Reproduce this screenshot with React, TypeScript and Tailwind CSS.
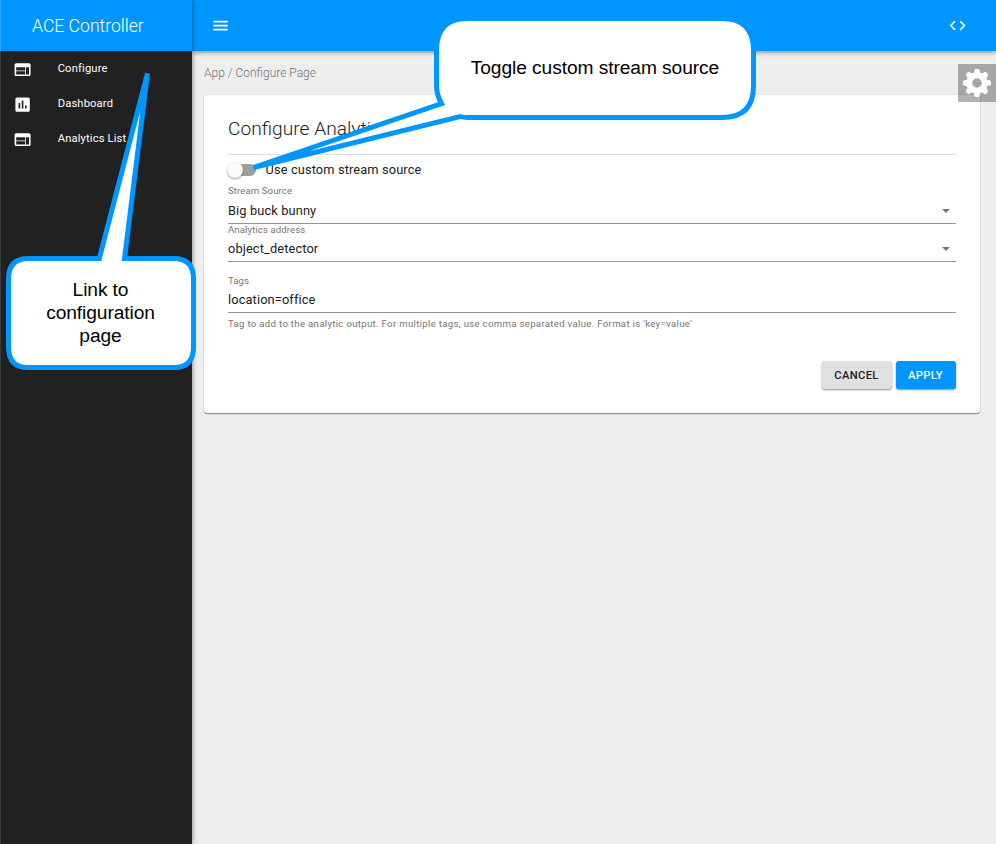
import { MdAssessment, MdCode, MdMenu, MdWeb } from "react-icons/md";

const links = [
  { label: "Configure", icon: MdWeb },
  { label: "Dashboard", icon: MdAssessment },
  { label: "Analytics List", icon: MdWeb },
];

function Sidebar() {
  return (
    <aside className="relative z-20 flex w-[192px] shrink-0 flex-col border-l border-[#3c3c3c] bg-[#212121] shadow-[0_0_5px_rgba(0,0,0,0.5)]">
      <div className="-ml-px flex h-[51px] items-center border-l border-[#2ba6ff] bg-[#0096ff] pl-[31px] text-[17.6px] font-light text-white">
        <span className="whitespace-nowrap pt-px">ACE Controller</span>
      </div>
      <nav className="flex flex-col">
        {links.map(({ label, icon: Icon }) => (
          <a key={label} className="flex h-[35.2px] items-center pl-[12px] text-[11.2px] tracking-[0.15px] text-white">
            <Icon className="mt-px size-[19.2px]" />
            <span className="ml-[25.5px] pt-px leading-4">{label}</span>
          </a>
        ))}
      </nav>
    </aside>
  );
}

function SelectField({ label, value, className }: { label: string; value: string; className: string }) {
  return (
    <div className={`flex flex-col border-b border-[#949494] ${className}`}>
      <span className="text-[9.6px] leading-[12px] tracking-[0.1px] text-[#757575]">{label}</span>
      <div className="flex flex-1 items-center justify-between pr-[6px]">
        <span className="text-[12.8px] leading-4 tracking-[0.13px] text-[#212121]">{value}</span>
        <svg className="mt-px h-[4px] w-[8px]" viewBox="0 0 8 4">
          <path d="M0 0h8L4 4z" fill="#757575" />
        </svg>
      </div>
    </div>
  );
}

function Gear() {
  return (
    <svg className="mr-px size-[28px]" viewBox="-14 -14 28 28" fill="#fff">
      {[0, 45, 90, 135, 180, 225, 270, 315].map((angle) => (
        <path key={angle} transform={`rotate(${angle})`} d="M-3.6-8.5L-2.5-13Q-2.3-14-1.4-14H1.4Q2.3-14 2.5-13L3.6-8.5z" />
      ))}
      <circle r="7.75" fill="none" stroke="#fff" strokeWidth="6" />
    </svg>
  );
}

function Callouts() {
  return (
    <>
      <svg className="pointer-events-none absolute inset-0 z-30 h-[844px] w-[996px]" viewBox="0 0 996 844" fill="#fff" stroke="#0096ff" strokeWidth="5">
        <path d="M467 18.5H722Q753.5 18.5 753.5 50V86Q753.5 117.5 722 117.5H468Q463 117.5 460 116.5L253.5 167.5L441.5 103.5Q436.5 95 436.5 85V50Q436.5 18.5 467 18.5Z" />
        <path d="M28 258.5H99.3L147.5 73.5L124.5 258.5H174Q193.5 258.5 193.5 279V347Q193.5 367.5 174 367.5H28Q8.5 367.5 8.5 347V279Q8.5 258.5 28 258.5Z" />
      </svg>
      <div className="absolute left-[437px] top-[56px] z-40 w-[316px] text-center font-['Liberation_Sans',Arial,sans-serif] text-[19.2px] leading-[23px] tracking-[-0.08px] text-black">
        Toggle custom stream source
      </div>
      <div className="absolute left-[30px] top-[278px] z-40 w-[141px] text-center font-['Liberation_Sans',Arial,sans-serif] text-[19.2px] leading-[23px] tracking-[-0.1px] text-black">
        Link to configuration page
      </div>
    </>
  );
}

export default function App() {
  return (
    <div className="relative flex h-[844px] w-[996px] overflow-hidden bg-[#eeeeee] font-[Roboto,sans-serif]">
      <Sidebar />
      <div className="flex flex-1 flex-col">
        <header className="relative z-10 flex h-[51px] items-center justify-between bg-[#0096ff] pl-[19px] pr-[29px] text-white shadow-[0_2px_4px_rgba(0,0,0,0.35)]">
          <MdMenu className="size-[19.2px]" />
          <MdCode className="size-[19.2px]" />
        </header>
        <main className="flex flex-col pl-3 pr-4">
          <div className="flex h-[44px] items-center text-[12px] font-light text-[#757575]">App / Configure Page</div>
          <section className="flex h-[318px] flex-col rounded-[3px] bg-white px-6 shadow-[0_1px_1px_rgba(0,0,0,0.45),0_0_2px_rgba(0,0,0,0.12)]">
            <h1 className="h-[60px] border-b border-[#e0e0e0] pt-[21px] text-[19.2px] font-light leading-[26px] text-[#212121]">Configure Analytics</h1>
            <div className="flex h-[30px] items-center">
              <div className="ml-px flex h-[12px] w-[27px] items-center rounded-full bg-[#9e9e9e]">
                <span className="-ml-[2px] size-4 shrink-0 rounded-full bg-[#fafafa] shadow-[0_1px_2px_rgba(0,0,0,0.4)]" />
              </div>
              <span className="ml-[9.5px] text-[12.8px] tracking-[0.13px] text-[#212121]">Use custom stream source</span>
            </div>
            <SelectField label="Stream Source" value="Big buck bunny" className="h-[39px] [&>div]:pt-px" />
            <SelectField label="Analytics address" value="object_detector" className="h-[38px]" />
            <label className="mt-[13px] flex h-[38px] flex-col border-b border-[#949494]">
              <span className="text-[9.6px] leading-[12px] tracking-[0.1px] text-[#757575]">Tags</span>
              <span className="flex flex-1 items-center text-[12.8px] leading-4 tracking-[0.13px] text-[#212121]">location=office</span>
            </label>
            <p className="mt-[5px] text-[9.6px] leading-[12px] tracking-[0.32px] text-[#757575]">
              Tag to add to the analytic output. For multiple tags, use comma separated value. Format is &#39;key=value&#39;
            </p>
            <div className="mt-[31px] flex justify-end gap-1 text-[11.2px] font-medium tracking-[0.35px]">
              <button className="h-[28px] w-[70px] rounded-[3px] bg-[#e0e0e0] pr-px pt-[2px] text-[#212121] shadow-[0_1px_2px_rgba(0,0,0,0.45)]">CANCEL</button>
              <button className="h-[28px] w-[60px] rounded-[3px] bg-[#0096ff] pr-px pt-[2px] text-white shadow-[0_1px_2px_rgba(0,0,0,0.45)]">APPLY</button>
            </div>
          </section>
        </main>
      </div>
      <button className="absolute right-0 top-[64px] z-20 flex size-[38px] items-center justify-center bg-black/30">
        <Gear />
      </button>
      <Callouts />
    </div>
  );
}
